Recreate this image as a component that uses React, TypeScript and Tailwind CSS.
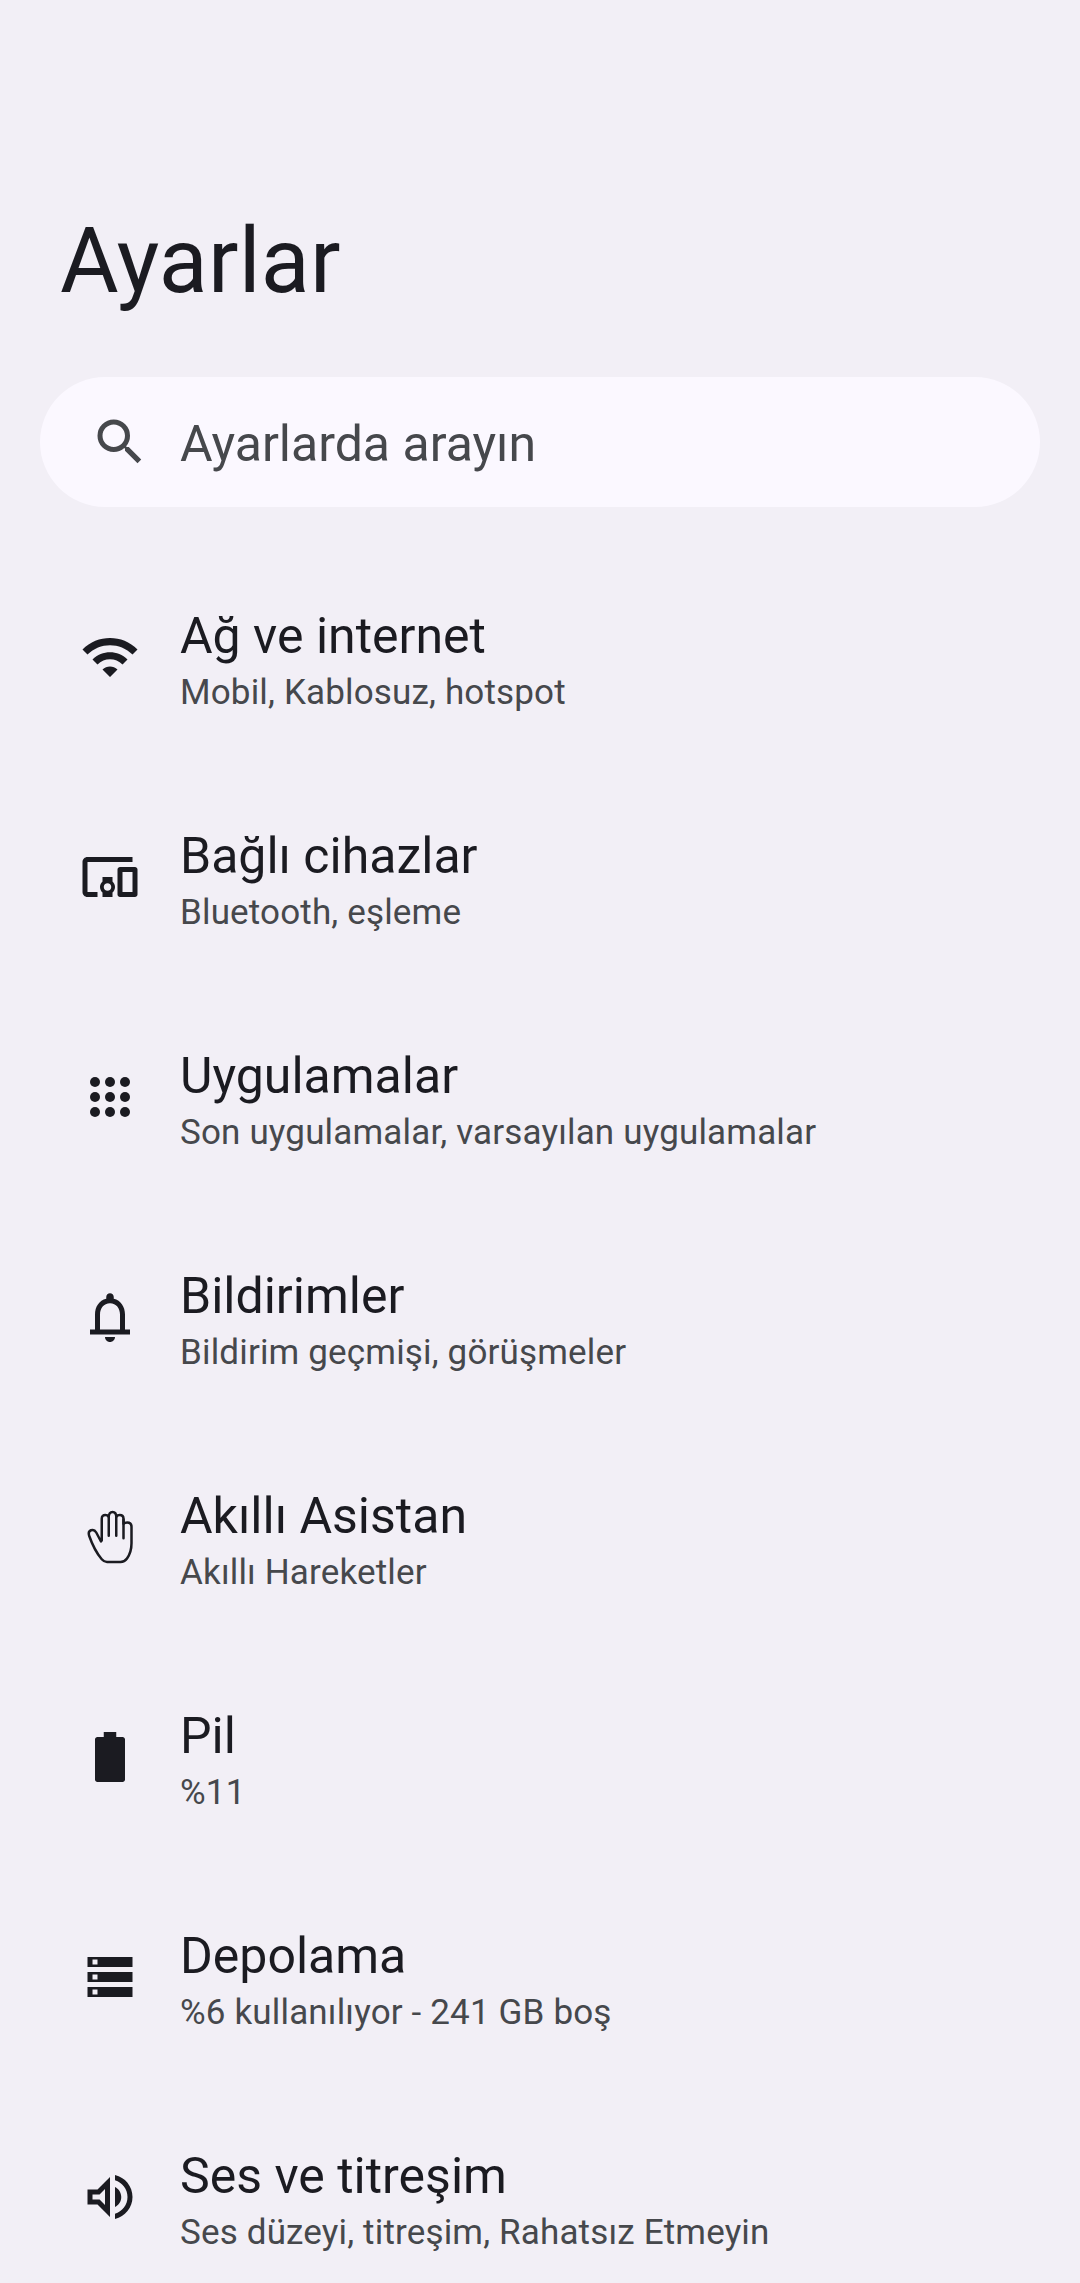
import React from 'react';

type IconProps = { className?: string };

const SearchIcon: React.FC<IconProps> = ({ className }) => (
  <svg viewBox="0 0 24 24" fill="currentColor" className={className}>
    <path d="M15.5 14h-.79l-.28-.27A6.47 6.47 0 0 0 16 9.5 6.5 6.5 0 1 0 9.5 16c1.61 0 3.09-.59 4.23-1.57l.27.28v.79l5 4.99L20.49 19l-4.99-5zm-6 0C7.01 14 5 11.99 5 9.5S7.01 5 9.5 5 14 7.01 14 9.5 11.99 14 9.5 14z" />
  </svg>
);

const HandIcon: React.FC = () => (
  <g fill="none" stroke="currentColor" strokeWidth="1" strokeLinecap="round" strokeLinejoin="round">
    <path d="M8.7 13.4V4.7C8.7 3.7 9.3 3.2 10.1 3.2c.6 0 1.1.2 1.4.7C11.5 2.7 12.1 2 13 2s1.5.7 1.5 1.9c.3-.5.8-.7 1.4-.7.9 0 1.5.6 1.5 1.5V6.7c.4-.4.9-.5 1.5-.5 1 0 1.7.6 1.7 1.7V14.5C20.6 17 19.8 19.2 18.8 20.6 18 21.7 17.3 22 16.2 22H10.8C9.9 22 9.4 21.7 8.7 20.9 6.5 18.3 5 15.3 3.7 11.6 3.3 10.4 3.6 9.6 4.4 9.3 5.2 9 6 9.3 6.5 10.2L8.4 13.8" />
    <path d="M11.5 3.9v7.6M14.5 3.9v7.6M17.4 5v7.5" />
  </g>
);

const items: { title: string; summary: string; icon: React.ReactNode }[] = [
  {
    title: 'Ağ ve internet',
    summary: 'Mobil, Kablosuz, hotspot',
    icon: (
      <path d="M1 9l2 2c4.97-4.97 13.03-4.97 18 0l2-2C16.93 2.93 7.08 2.93 1 9zm8 8l3 3 3-3c-1.65-1.66-4.34-1.66-6 0zm-4-4l2 2c2.76-2.76 7.24-2.76 10 0l2-2C15.14 9.14 8.87 9.14 5 13z" />
    ),
  },
  {
    title: 'Bağlı cihazlar',
    summary: 'Bluetooth, eşleme',
    icon: (
      <path d="M3 6h18V4H3c-1.1 0-2 .9-2 2v12c0 1.1.9 2 2 2h4v-2H3V6zm10 6H9v1.78c-.61.55-1 1.33-1 2.22s.39 1.67 1 2.22V20h4v-1.78c.61-.55 1-1.34 1-2.22s-.39-1.67-1-2.22V12zm-2 5.5c-.83 0-1.5-.67-1.5-1.5s.67-1.5 1.5-1.5 1.5.67 1.5 1.5-.67 1.5-1.5 1.5zM22 8h-6c-.5 0-1 .5-1 1v10c0 .5.5 1 1 1h6c.5 0 1-.5 1-1V9c0-.5-.5-1-1-1zm-1 10h-4v-8h4v8z" />
    ),
  },
  {
    title: 'Uygulamalar',
    summary: 'Son uygulamalar, varsayılan uygulamalar',
    icon: [6, 12, 18].map((y) => [6, 12, 18].map((x) => <circle key={`${x}-${y}`} cx={x} cy={y} r="2" />)),
  },
  {
    title: 'Bildirimler',
    summary: 'Bildirim geçmişi, görüşmeler',
    icon: (
      <path d="M18 17v-6c0-3.07-1.63-5.64-4.5-6.32V4c0-.83-.67-1.5-1.5-1.5s-1.5.67-1.5 1.5v.68C7.64 5.36 6 7.92 6 11v6H4v2h16v-2h-2zm-2 0H8v-6c0-2.48 1.51-4.5 4-4.5s4 2.02 4 4.5v6zm-4 5c1.1 0 2-.9 2-2h-4c0 1.1.9 2 2 2z" />
    ),
  },
  { title: 'Akıllı Asistan', summary: 'Akıllı Hareketler', icon: <HandIcon /> },
  {
    title: 'Pil',
    summary: '%11',
    icon: <path d="M17 4h-2.5V2h-5v2H7c-.55 0-1 .45-1 1v16c0 .55.45 1 1 1h10c.55 0 1-.45 1-1V5c0-.55-.45-1-1-1z" />,
  },
  {
    title: 'Depolama',
    summary: '%6 kullanılıyor - 241 GB boş',
    icon: (
      <path
        fillRule="evenodd"
        d="M3 20h18v-4H3v4zm2-3h2v2H5v-2zM3 4v4h18V4H3zm4 3H5V5h2v2zm-4 7h18v-4H3v4zm2-3h2v2H5v-2z"
      />
    ),
  },
  {
    title: 'Ses ve titreşim',
    summary: 'Ses düzeyi, titreşim, Rahatsız Etmeyin',
    icon: (
      <path d="M3 9v6h4l5 5V4L7 9H3zm7-.17v6.34L7.83 13H5v-2h2.83L10 8.83zM16.5 12c0-1.77-1.02-3.29-2.5-4.03v8.05c1.48-.73 2.5-2.25 2.5-4.02zM14 3.23v2.06c2.89.86 5 3.54 5 6.71s-2.11 5.85-5 6.71v2.06c4.01-.91 7-4.49 7-8.77s-2.99-7.86-7-8.77z" />
    ),
  },
];

const App: React.FC = () => {
  return (
    <div className="w-full h-[2283px] overflow-hidden bg-[#f2eff6] text-[#1b1b21] font-['Roboto',sans-serif]">
      <h1 className="pt-[209px] pl-[60px] text-[90px] leading-[106px] tracking-[0.2px]">Ayarlar</h1>

      <div className="mt-[62px] mx-10 h-[130px] rounded-full bg-[#fbf8ff] flex items-center pl-[50px] text-[#46484c]">
        <SearchIcon className="w-[60px] h-[60px]" />
        <span className="ml-[30px] pt-1 text-[50px] leading-[60px]">Ayarlarda arayın</span>
      </div>

      <div className="mt-10">
        {items.map((item) => (
          <div key={item.title} className="h-[220px] flex items-center pl-20">
            <svg viewBox="0 0 24 24" fill="currentColor" className="w-[60px] h-[60px] shrink-0">
              {item.icon}
            </svg>
            <div className="ml-10 pt-1">
              <div className="text-[50px] leading-[66px]">{item.title}</div>
              <div className="pt-px -mb-px text-[35px] leading-[46px] tracking-[0.16px] text-[#46484c]">{item.summary}</div>
            </div>
          </div>
        ))}
      </div>
    </div>
  );
};

export default App;
